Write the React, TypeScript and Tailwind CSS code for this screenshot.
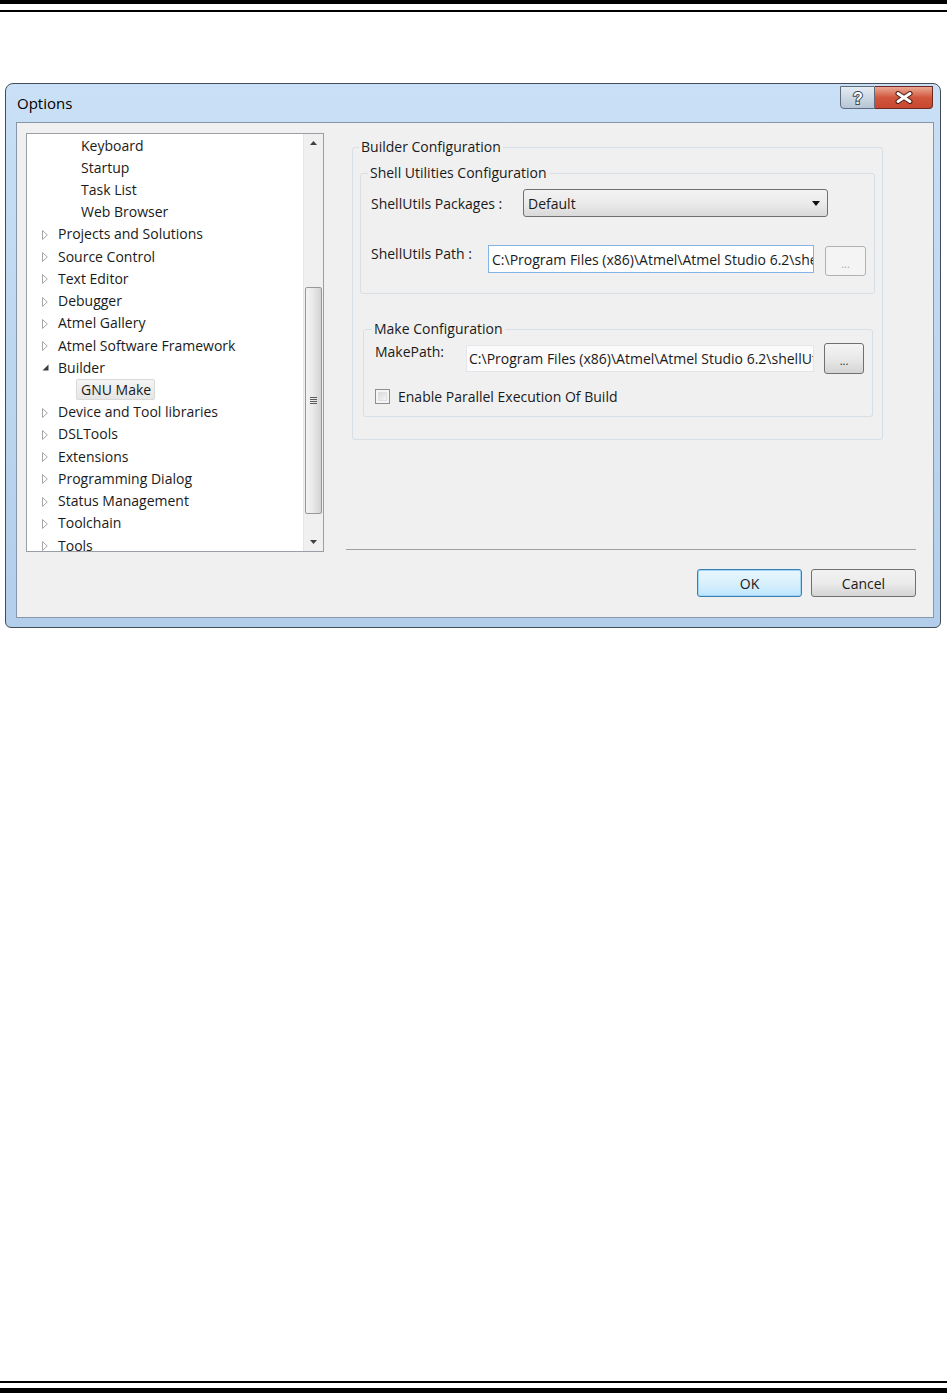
import React from "react";

type Item = { t: string; lvl: 0 | 1; arrow?: "closed" | "open"; selected?: boolean };

const items: Item[] = [
  { t: "Keyboard", lvl: 1 },
  { t: "Startup", lvl: 1 },
  { t: "Task List", lvl: 1 },
  { t: "Web Browser", lvl: 1 },
  { t: "Projects and Solutions", lvl: 0, arrow: "closed" },
  { t: "Source Control", lvl: 0, arrow: "closed" },
  { t: "Text Editor", lvl: 0, arrow: "closed" },
  { t: "Debugger", lvl: 0, arrow: "closed" },
  { t: "Atmel Gallery", lvl: 0, arrow: "closed" },
  { t: "Atmel Software Framework", lvl: 0, arrow: "closed" },
  { t: "Builder", lvl: 0, arrow: "open" },
  { t: "GNU Make", lvl: 1, selected: true },
  { t: "Device and Tool libraries", lvl: 0, arrow: "closed" },
  { t: "DSLTools", lvl: 0, arrow: "closed" },
  { t: "Extensions", lvl: 0, arrow: "closed" },
  { t: "Programming Dialog", lvl: 0, arrow: "closed" },
  { t: "Status Management", lvl: 0, arrow: "closed" },
  { t: "Toolchain", lvl: 0, arrow: "closed" },
  { t: "Tools", lvl: 0, arrow: "closed" },
];

function Arrow({ kind }: { kind: "closed" | "open" }) {
  if (kind === "open") {
    return (
      <svg width="7" height="7" viewBox="0 0 7 7" className="mt-[1px]">
        <path d="M6.5 0.5 L6.5 6.5 L0.5 6.5 Z" fill="#3c3c3c" />
      </svg>
    );
  }
  return (
    <svg width="6" height="10" viewBox="0 0 6 10" className="mt-[2px]">
      <path d="M0.5 0.5 L5.3 5 L0.5 9.5 Z" fill="none" stroke="#a6a6a6" strokeWidth="1" />
    </svg>
  );
}

function Tree() {
  return (
    <div className="w-[298px] h-[419px] border border-[#9a9ea5] bg-white flex overflow-hidden">
      <div className="flex-1 overflow-hidden">
        {items.map((it) => (
          <div key={it.t} className="h-[22.22px] flex items-center whitespace-nowrap">
            {it.lvl === 0 ? (
              <>
                <span className="w-[31px] pl-[15px] flex items-center">
                  <Arrow kind={it.arrow!} />
                </span>
                <span>{it.t}</span>
              </>
            ) : it.selected ? (
              <span className="ml-[49px] h-[21px] pl-[4px] pr-[3px] flex items-center border border-[#d9d9d9] rounded-[2px] bg-linear-to-b from-[#f4f4f4] to-[#e6e6e6]">
                {it.t}
              </span>
            ) : (
              <span className="pl-[54px]">{it.t}</span>
            )}
          </div>
        ))}
      </div>
      <div className="w-[20px] flex flex-col bg-[#f0f0f0] border-l border-[#e6e6e6]">
        <div className="h-[18px] flex items-center justify-center">
          <svg width="7" height="4" viewBox="0 0 7 4">
            <path d="M3.5 0 L7 4 L0 4 Z" fill="#404040" />
          </svg>
        </div>
        <div className="flex-1 flex flex-col">
          <div className="mt-[135px] h-[227px] mx-[1px] rounded-[2px] border border-[#979797] bg-linear-to-r from-[#f3f3f3] via-[#e8e8e8] to-[#d2d2d2] flex items-center justify-center">
            <div className="flex flex-col gap-[1px]">
              <div className="w-[7px] h-[1px] bg-[#5c5c5c]" />
              <div className="w-[7px] h-[1px] bg-[#5c5c5c]" />
              <div className="w-[7px] h-[1px] bg-[#5c5c5c]" />
              <div className="w-[7px] h-[1px] bg-[#5c5c5c]" />
            </div>
          </div>
        </div>
        <div className="h-[18px] flex items-center justify-center">
          <svg width="7" height="4" viewBox="0 0 7 4">
            <path d="M0 0 L7 0 L3.5 4 Z" fill="#404040" />
          </svg>
        </div>
      </div>
    </div>
  );
}

function DotsButton({ disabled, h, w }: { disabled?: boolean; h: string; w: string }) {
  return disabled ? (
    <div className={`${w} ${h} rounded-[3px] border border-[#adb2b5] bg-[#f4f4f4] flex items-center justify-center text-[#a6a6a6] text-[11px] leading-none pt-[4px]`}>
      ...
    </div>
  ) : (
    <div className={`${w} ${h} rounded-[3px] border border-[#707070] bg-linear-to-b from-[#f4f4f4] via-[#e9e9e9] to-[#d4d4d4] flex items-center justify-center text-[#1a1a1a] text-[11px] leading-none pt-[4px]`}>
      ...
    </div>
  );
}

function RightPanel() {
  return (
    <div className="ml-[22px] w-[570px] flex flex-col">
      <fieldset className="mt-[4px] ml-[6px] w-[531px] border border-[#d5dfe5] rounded-[3px] pl-[6px] pb-[22px]">
        <legend className="px-[2px] leading-[20px]">Builder Configuration</legend>
        <fieldset className="mt-[6px] ml-[1px] w-[515px] border border-[#d5dfe5] rounded-[3px] pl-[7px] pb-[17px]">
          <legend className="px-[2px] leading-[20px]">Shell Utilities Configuration</legend>
          <div className="mt-[6px] flex items-center">
            <span className="ml-[3px] w-[152px]">ShellUtils Packages :</span>
            <div className="w-[305px] h-[28px] rounded-[3px] border border-[#707070] bg-linear-to-b from-[#f2f2f2] via-[#ebebeb] to-[#d9d9d9] flex items-center pl-[4px] pr-[7px] justify-between">
              <span>Default</span>
              <svg width="8" height="5" viewBox="0 0 8 5">
                <path d="M0 0 L8 0 L4 5 Z" fill="#101010" />
              </svg>
            </div>
          </div>
          <div className="mt-[28px] flex items-start">
            <span className="ml-[3px] w-[117px] leading-[18px]">ShellUtils Path :</span>
            <div className="w-[326px] h-[28px] border border-[#84b3e4] bg-white flex items-center pl-[3px] overflow-hidden whitespace-nowrap">
              {"C:\\Program Files (x86)\\Atmel\\Atmel Studio 6.2\\shellUtils"}
            </div>
            <div className="ml-[11px] mt-[1px]">
              <DotsButton disabled w="w-[41px]" h="h-[30px]" />
            </div>
          </div>
        </fieldset>
        <fieldset className="mt-[25px] ml-[4px] w-[510px] border border-[#d5dfe5] rounded-[3px] pl-[8px] pb-[10px]">
          <legend className="px-[2px] leading-[20px]">Make Configuration</legend>
          <div className="mt-[4px] flex items-start">
            <span className="ml-[3px] w-[91px] leading-[17px]">MakePath:</span>
            <div className="mt-[2px] w-[348px] h-[27px] border border-[#e2e6ea] bg-[#fbfbfb] flex items-center pl-[2px] overflow-hidden whitespace-nowrap">
              {"C:\\Program Files (x86)\\Atmel\\Atmel Studio 6.2\\shellUtils"}
            </div>
            <div className="ml-[10px]">
              <DotsButton w="w-[40px]" h="h-[31px]" />
            </div>
          </div>
          <div className="mt-[12px] h-[20px] flex items-center">
            <div className="ml-[3px] w-[15px] h-[15px] border border-[#8f8f8f] bg-[#f4f4f4] p-[2px]">
              <div className="w-full h-full bg-linear-to-br from-[#d9d9d9] to-[#f6f6f6] border border-[#e0e0e0]" />
            </div>
            <span className="ml-[8px]">Enable Parallel Execution Of Build</span>
          </div>
        </fieldset>
      </fieldset>
      <div className="mt-[109px] h-[1px] bg-[#a0a0a0]" />
      <div className="mt-[19px] flex justify-end gap-[9px]">
        <div className="w-[105px] h-[28px] rounded-[3px] border border-[#3c7fb1] bg-linear-to-b from-[#eaf6fd] via-[#d9f0fc] to-[#bee6fd] flex items-center justify-center shadow-[inset_0_0_0_1px_#9fd6f5]">
          OK
        </div>
        <div className="w-[105px] h-[28px] rounded-[3px] border border-[#707070] bg-linear-to-b from-[#f2f2f2] via-[#ebebeb] to-[#d4d4d4] flex items-center justify-center">
          Cancel
        </div>
      </div>
    </div>
  );
}

function Dialog() {
  return (
    <div className="mt-[71px] ml-[5px] w-[936px] h-[545px] rounded-t-[8px] rounded-b-[6px] border border-[#434c57] bg-linear-to-b from-[#c9e0f6] via-[#bed7f0] to-[#b2ceeb] flex flex-col">
      <div className="h-[38px] flex justify-between items-start">
        <span className="ml-[11px] mt-[9px] leading-[20px] text-[15px] text-black">Options</span>
        <div className="mt-[2px] mr-[7px] flex">
          <div className="w-[35px] h-[23px] rounded-bl-[4px] border border-[#5e6c7c] bg-linear-to-b from-[#e4ecf4] via-[#cdd8e4] to-[#b6c5d6] flex items-center justify-center">
            <svg width="14" height="18" viewBox="0 0 14 18">
              <text
                x="7"
                y="15"
                textAnchor="middle"
                fontFamily="'Liberation Sans', Arial, sans-serif"
                fontWeight="bold"
                fontSize="16"
                fill="#ffffff"
                stroke="#3a4858"
                strokeWidth="2"
                paintOrder="stroke"
              >
                ?
              </text>
            </svg>
          </div>
          <div className="w-[58px] h-[23px] rounded-br-[4px] border border-l-0 border-[#6e2a1f] bg-linear-to-b from-[#eaa995] via-[#d0563c] to-[#c74730] flex items-center justify-center">
            <svg width="18" height="13" viewBox="0 0 18 13">
              <path d="M3 2.5 L15 10.5 M15 2.5 L3 10.5" stroke="#4a1d15" strokeWidth="5" strokeLinecap="round" />
              <path d="M3 2.5 L15 10.5 M15 2.5 L3 10.5" stroke="#ffffff" strokeWidth="3" strokeLinecap="round" />
            </svg>
          </div>
        </div>
      </div>
      <div className="ml-[10px] w-[918px] h-[496px] border border-[#8796a8] bg-[#f0f0f0] pl-[9px] pt-[10px] flex items-start">
        <Tree />
        <RightPanel />
      </div>
    </div>
  );
}

export default function App() {
  return (
    <div className="w-[947px] h-[1393px] bg-white flex flex-col font-['Segoe_UI','Open_Sans',sans-serif] text-[14px] text-[#1a1a1a]">
      <div className="h-[4px] bg-black shrink-0" />
      <div className="mt-[6px] h-[2px] bg-black shrink-0" />
      <Dialog />
      <div className="mt-auto h-[2px] bg-black shrink-0" />
      <div className="mt-[5px] h-[5px] bg-black shrink-0" />
    </div>
  );
}
